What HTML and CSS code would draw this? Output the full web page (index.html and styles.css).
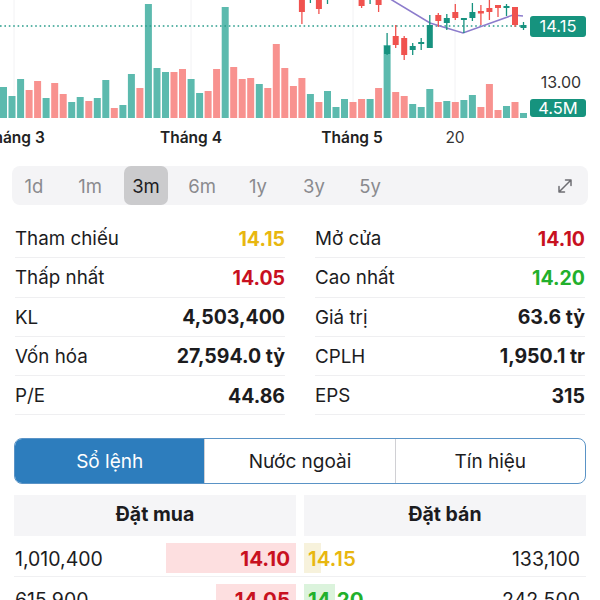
FILE: index.html
```html
<!DOCTYPE html>
<html lang="vi">
<head>
<meta charset="utf-8">
<title>Chart</title>
<link rel="stylesheet" href="styles.css">
</head>
<body>
<div class="chart">
<svg class="chart-svg" width="600" height="152" viewBox="0 0 600 152">
  <g class="grid">
    <line x1="14" y1="0" x2="14" y2="118"/>
    <line x1="191" y1="0" x2="191" y2="118"/>
    <line x1="353" y1="0" x2="353" y2="118"/>
    <line x1="455" y1="0" x2="455" y2="118"/>
  </g>
  <g class="vol-t">
    <rect x="0" y="87" width="7" height="31"/>
    <rect x="8.5" y="96" width="7" height="22"/>
    <rect x="17.1" y="79" width="7" height="39"/>
    <rect x="42.6" y="98" width="7" height="20"/>
    <rect x="68.2" y="102" width="7" height="16"/>
    <rect x="76.7" y="97" width="7" height="21"/>
    <rect x="93.8" y="98" width="7" height="20"/>
    <rect x="102.3" y="80" width="7" height="38"/>
    <rect x="119.4" y="105" width="7" height="13"/>
    <rect x="127.9" y="74" width="7" height="44"/>
    <rect x="144.9" y="4" width="7" height="114"/>
    <rect x="153.5" y="68" width="7" height="50"/>
    <rect x="162.0" y="72" width="7" height="46"/>
    <rect x="187.6" y="79" width="7" height="39"/>
    <rect x="196.1" y="93" width="7" height="25"/>
    <rect x="221.7" y="7" width="7" height="111"/>
    <rect x="255.8" y="84" width="7" height="34"/>
    <rect x="306.9" y="94" width="7" height="24"/>
    <rect x="324.0" y="91" width="7" height="27"/>
    <rect x="332.5" y="107" width="7" height="11"/>
    <rect x="341.0" y="99" width="7" height="19"/>
    <rect x="366.6" y="99" width="7" height="19"/>
    <rect x="383.6" y="45" width="7" height="73"/>
    <rect x="409.2" y="104" width="7" height="14"/>
    <rect x="417.7" y="107" width="7" height="11"/>
    <rect x="426.3" y="89" width="7" height="29"/>
    <rect x="443.3" y="101" width="7" height="17"/>
    <rect x="460.4" y="100" width="7" height="18"/>
    <rect x="468.9" y="95" width="7" height="23"/>
    <rect x="503.0" y="106" width="7" height="12"/>
    <rect x="520.0" y="113" width="7" height="5"/>
  </g>
  <g class="vol-p">
    <rect x="25.6" y="90" width="7" height="28"/>
    <rect x="34.1" y="81" width="7" height="37"/>
    <rect x="51.2" y="83" width="7" height="35"/>
    <rect x="59.7" y="94" width="7" height="24"/>
    <rect x="85.3" y="101" width="7" height="17"/>
    <rect x="110.8" y="108" width="7" height="10"/>
    <rect x="136.4" y="88" width="7" height="30"/>
    <rect x="170.5" y="72" width="7" height="46"/>
    <rect x="179.0" y="69" width="7" height="49"/>
    <rect x="204.6" y="91" width="7" height="27"/>
    <rect x="213.1" y="69" width="7" height="49"/>
    <rect x="230.2" y="67" width="7" height="51"/>
    <rect x="238.7" y="79" width="7" height="39"/>
    <rect x="247.2" y="78" width="7" height="40"/>
    <rect x="264.3" y="88" width="7" height="30"/>
    <rect x="272.8" y="44" width="7" height="74"/>
    <rect x="281.3" y="68" width="7" height="50"/>
    <rect x="289.9" y="86" width="7" height="32"/>
    <rect x="298.4" y="78" width="7" height="40"/>
    <rect x="315.4" y="102" width="7" height="16"/>
    <rect x="349.5" y="102" width="7" height="16"/>
    <rect x="358.1" y="99" width="7" height="19"/>
    <rect x="375.1" y="88" width="7" height="30"/>
    <rect x="392.2" y="92" width="7" height="26"/>
    <rect x="400.7" y="96" width="7" height="22"/>
    <rect x="434.8" y="102" width="7" height="16"/>
    <rect x="451.8" y="102" width="7" height="16"/>
    <rect x="477.4" y="107" width="7" height="11"/>
    <rect x="485.9" y="84" width="7" height="34"/>
    <rect x="494.5" y="110" width="7" height="8"/>
    <rect x="511.5" y="102" width="7" height="16"/>
  </g>
  <line class="ref-line" x1="0" y1="26" x2="528" y2="26"/>
  <polyline class="ma" points="378,-8 392,0 430,23 463,33 513,15 523,16"/>
  <g class="c-r">
    <line x1="301.9" y1="-5" x2="301.9" y2="24"/><rect x="298.9" y="-5" width="6" height="17"/>
    <line x1="318.9" y1="-5" x2="318.9" y2="14"/><rect x="315.9" y="-5" width="6" height="14"/>
    <line x1="361.6" y1="-5" x2="361.6" y2="8"/><rect x="358.6" y="-5" width="6" height="11"/>
    <line x1="378.6" y1="-5" x2="378.6" y2="12"/><rect x="375.6" y="-5" width="6" height="10"/>
    <line x1="395.7" y1="25" x2="395.7" y2="48"/><rect x="392.7" y="36" width="6" height="9"/>
    <line x1="404.2" y1="36" x2="404.2" y2="60"/><rect x="401.2" y="38" width="6" height="17"/>
    <line x1="438.3" y1="13" x2="438.3" y2="27"/><rect x="435.3" y="15" width="6" height="6"/>
    <line x1="455.3" y1="4" x2="455.3" y2="20"/><rect x="452.3" y="12" width="6" height="6"/>
    <line x1="480.9" y1="5" x2="480.9" y2="25"/><rect x="477.9" y="11" width="6" height="2.5"/>
    <line x1="489.4" y1="0" x2="489.4" y2="20"/><rect x="486.4" y="8" width="6" height="4"/>
    <line x1="498" y1="5" x2="498" y2="17"/><rect x="495" y="5" width="6" height="3"/>
    <line x1="515" y1="7" x2="515" y2="27"/><rect x="512" y="7" width="6" height="18"/>
  </g>
  <g class="c-t">
    <line x1="310.4" y1="-5" x2="310.4" y2="3"/>
    <line x1="327.5" y1="-5" x2="327.5" y2="4"/>
    <line x1="370.1" y1="-5" x2="370.1" y2="4"/>
    <line x1="387.1" y1="33" x2="387.1" y2="55"/><rect x="384.1" y="46" width="6" height="8"/>
    <line x1="412.7" y1="43" x2="412.7" y2="55"/><rect x="409.7" y="46" width="6" height="4"/>
    <line x1="421.2" y1="38" x2="421.2" y2="50"/><rect x="418.2" y="42" width="6" height="2"/>
    <line x1="429.8" y1="15" x2="429.8" y2="48"/><rect x="426.8" y="25" width="6" height="23"/>
    <line x1="446.8" y1="14" x2="446.8" y2="30"/><rect x="443.8" y="18" width="6" height="5"/>
    <line x1="463.9" y1="18" x2="463.9" y2="33"/><rect x="460.9" y="18" width="6" height="2"/>
    <line x1="472.4" y1="3" x2="472.4" y2="21"/><rect x="469.4" y="12" width="6" height="6"/>
    <line x1="506.5" y1="4" x2="506.5" y2="16"/><rect x="503.5" y="6" width="6" height="2"/>
    <line x1="523.5" y1="22" x2="523.5" y2="30"/><rect x="520.5" y="25" width="6" height="3"/>
  </g>
  <rect class="tag" x="530" y="16" width="56" height="21" rx="3"/>
  <text class="tag-text" x="558" y="32" text-anchor="middle">14.15</text>
  <text class="axis-price" x="561" y="88" text-anchor="middle">13.00</text>
  <rect class="tag" x="530" y="99" width="56" height="18" rx="3"/>
  <text class="tag-text" x="558" y="114" text-anchor="middle">4.5M</text>
  <text class="axis-label" x="14" y="143" text-anchor="middle">Tháng 3</text>
  <text class="axis-label" x="191" y="143" text-anchor="middle">Tháng 4</text>
  <text class="axis-label" x="352" y="143" text-anchor="middle">Tháng 5</text>
  <text class="axis-day" x="455" y="143" text-anchor="middle">20</text>
</svg>
</div>

<div class="periods">
  <span class="period">1d</span>
  <span class="period">1m</span>
  <span class="period active">3m</span>
  <span class="period">6m</span>
  <span class="period">1y</span>
  <span class="period">3y</span>
  <span class="period">5y</span>
  <svg class="expand" width="20" height="20" viewBox="0 0 20 20">
    <path d="M4 16 L16 4 M10.5 4 H16 V9.5 M4 10.5 V16 H9.5"/>
  </svg>
</div>

<div class="stats">
  <div class="stat"><span class="label">Tham chiếu</span><span class="value ref">14.15</span></div>
  <div class="stat"><span class="label">Mở cửa</span><span class="value down">14.10</span></div>
  <div class="stat"><span class="label">Thấp nhất</span><span class="value down">14.05</span></div>
  <div class="stat"><span class="label">Cao nhất</span><span class="value up">14.20</span></div>
  <div class="stat"><span class="label">KL</span><span class="value">4,503,400</span></div>
  <div class="stat"><span class="label">Giá trị</span><span class="value">63.6 tỷ</span></div>
  <div class="stat"><span class="label">Vốn hóa</span><span class="value">27,594.0 tỷ</span></div>
  <div class="stat"><span class="label">CPLH</span><span class="value">1,950.1 tr</span></div>
  <div class="stat"><span class="label">P/E</span><span class="value">44.86</span></div>
  <div class="stat"><span class="label">EPS</span><span class="value">315</span></div>
</div>

<div class="tabs">
  <div class="tab active">Sổ lệnh</div>
  <div class="tab">Nước ngoài</div>
  <div class="tab">Tín hiệu</div>
</div>

<div class="book-head">
  <div class="head-cell">Đặt mua</div>
  <div class="head-cell">Đặt bán</div>
</div>

<div class="book-row">
  <div class="side buy">
    <span class="depth depth-buy" style="width:130px"></span>
    <span class="qty">1,010,400</span>
    <span class="price down">14.10</span>
  </div>
  <div class="side sell">
    <span class="depth depth-ref" style="width:17px"></span>
    <span class="price ref">14.15</span>
    <span class="qty">133,100</span>
  </div>
</div>
<div class="book-row">
  <div class="side buy">
    <span class="depth depth-buy" style="width:80px"></span>
    <span class="qty">615,900</span>
    <span class="price down">14.05</span>
  </div>
  <div class="side sell">
    <span class="depth depth-up" style="width:31px"></span>
    <span class="price up">14.20</span>
    <span class="qty">242,500</span>
  </div>
</div>
</body>
</html>
```

FILE: styles.css
```css
* { box-sizing: border-box; }

html, body {
  margin: 0;
  padding: 0;
  background: #ffffff;
}

body {
  width: 600px;
  height: 600px;
  overflow: hidden;
  font-family: Inter, "Noto Sans", "Liberation Sans", sans-serif;
  color: #1c1c1e;
}

/* ---------- chart ---------- */
.chart { height: 152px; }
.chart-svg { display: block; overflow: hidden; }

.grid line { stroke: #f2f2f4; stroke-width: 1; }
.vol-t rect { fill: #5cbaae; }
.vol-p rect { fill: #f8928f; }
.c-r line { stroke: #f0524e; stroke-width: 1.3; }
.c-r rect { fill: #f0524e; }
.c-t line { stroke: #17927f; stroke-width: 1.3; }
.c-t rect { fill: #17927f; }

.ref-line {
  stroke: #2a9d8c;
  stroke-width: 1.6;
  stroke-dasharray: 1.6 2.8;
}
.ma {
  fill: none;
  stroke: #8c7ccc;
  stroke-width: 1.5;
}
.tag { fill: #16937e; }
.tag-text {
  fill: #ffffff;
  font-family: Inter, "Noto Sans", sans-serif;
  font-size: 16.5px;
}
.axis-price {
  fill: #333333;
  font-family: Inter, "Noto Sans", sans-serif;
  font-size: 16px;
}
.axis-label {
  fill: #222222;
  font-family: Inter, "Noto Sans", sans-serif;
  font-size: 15.5px;
  font-weight: 600;
}
.axis-day {
  fill: #333333;
  font-family: Inter, "Noto Sans", sans-serif;
  font-size: 15.5px;
}

/* ---------- periods ---------- */
.periods {
  margin: 14px 12px 0;
  height: 39px;
  background: #f4f4f6;
  border-radius: 8px;
  display: flex;
  align-items: center;
  gap: 12px;
  padding-right: 13px;
}
.period {
  width: 44px;
  height: 39px;
  display: flex;
  align-items: center;
  justify-content: center;
  font-size: 18.5px;
  color: #8a8a8e;
  border-radius: 7px;
}
.period.active {
  background: #cbcbcd;
  color: #1c1c1e;
}
.expand {
  margin-left: auto;
  fill: none;
  stroke: #6e6e73;
  stroke-width: 1.5;
  stroke-linecap: round;
  stroke-linejoin: round;
}

/* ---------- stats ---------- */
.stats {
  margin-top: 14px;
  padding: 0 15px;
  display: grid;
  grid-template-columns: 1fr 1fr;
  column-gap: 30px;
}
.stat {
  height: 39.25px;
  padding-top: 1px;
  display: flex;
  align-items: center;
  justify-content: space-between;
  border-bottom: 1px solid #efeff1;
  font-size: 18.8px;
}
.label { color: #1c1c1e; }
.value {
  font-weight: 700;
  font-size: 19.5px;
  color: #1c1c1e;
}
.ref { color: #e8b710; }
.down { color: #c8111f; }
.up { color: #22b02c; }

/* ---------- tabs ---------- */
.tabs {
  margin: 23px 14px 0;
  height: 46px;
  display: flex;
  border: 1px solid #5a93c6;
  border-radius: 8px;
  overflow: hidden;
}
.tab {
  flex: 1;
  display: flex;
  align-items: center;
  justify-content: center;
  font-size: 19px;
  color: #1c1c1e;
  border-left: 1px solid #d0d0d4;
}
.tab.active {
  background: #2d7dbd;
  color: #ffffff;
  border-left: none;
}

/* ---------- order book ---------- */
.book-head {
  margin: 11px 14px 0;
  display: grid;
  grid-template-columns: 1fr 1fr;
  column-gap: 8px;
}
.head-cell {
  height: 41px;
  padding-bottom: 3px;
  background: #f5f5f7;
  display: flex;
  align-items: center;
  justify-content: center;
  font-size: 19.5px;
  font-weight: 700;
}
.book-row {
  margin: 0 14px;
  padding: 7px 0 3px;
  display: grid;
  grid-template-columns: 1fr 1fr;
  column-gap: 8px;
  border-bottom: 1px solid #f0f0f2;
}
.side {
  position: relative;
  height: 30px;
  padding-top: 1px;
  display: flex;
  align-items: center;
  justify-content: space-between;
  font-size: 19.5px;
}
.buy { padding-left: 1px; padding-right: 6px; }
.sell { padding-left: 4px; padding-right: 6px; }
.depth {
  position: absolute;
  top: 0;
  bottom: 0;
}
.depth-buy { right: 0; background: #fddfe0; }
.depth-ref { left: 0; background: #f7f2dc; }
.depth-up { left: 0; background: #dbf3dc; }
.qty, .price { position: relative; }
.qty { color: #1c1c1e; }
.price { font-weight: 700; font-size: 20.5px; }
.price.ref { font-weight: 600; }
```
